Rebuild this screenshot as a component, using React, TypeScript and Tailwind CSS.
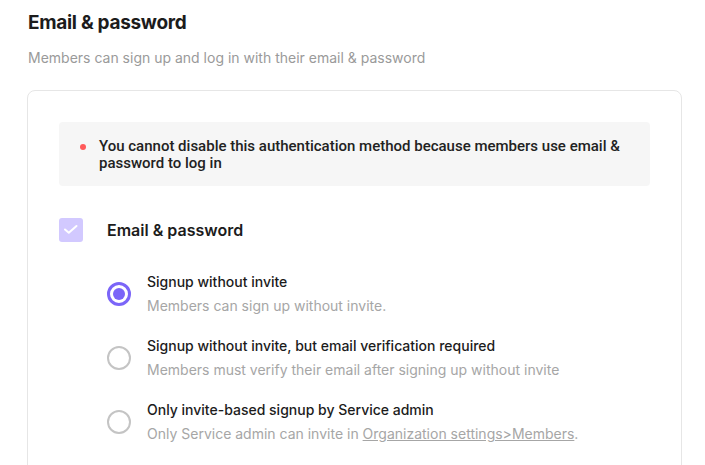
const options = [
  {
    title: "Signup without invite",
    desc: <>Members can sign up without invite.</>,
    checked: true,
  },
  {
    title: "Signup without invite, but email verification required",
    desc: <>Members must verify their email after signing up without invite</>,
    checked: false,
  },
  {
    title: "Only invite-based signup by Service admin",
    desc: (
      <>
        Only Service admin can invite in{" "}
        <a href="#" className="underline">
          Organization settings&gt;Members
        </a>
        .
      </>
    ),
    checked: false,
  },
];

const App = () => {
  return (
    <div className="h-[465px] overflow-hidden bg-white pl-[27px] pr-[23px] pt-[10px] font-['Inter',sans-serif] text-[#1c1c1c]">
      <h1 className="pl-px text-[19px] font-bold leading-[26px] tracking-[-0.3px]">
        Email &amp; password
      </h1>
      <p className="mt-[12px] pl-px text-[14px] leading-[20px] text-[#9a9a9a]">
        Members can sign up and log in with their email &amp; password
      </p>

      <div className="mt-[22px] rounded-lg border border-[#e6e6e6] px-[31px] pt-[31px] pb-10">
        <div className="flex items-start gap-[13px] rounded bg-[#f6f6f6] pt-4 pb-[14px] pl-[21px] pr-4">
          <span className="mt-[6px] h-[6px] w-[6px] shrink-0 rounded-full bg-[#ff5a5a]" />
          <p className="font-['Roboto',sans-serif] text-[15px] font-medium leading-[17px] text-[#222]">
            You cannot disable this authentication method because members use email &amp; password to log in
          </p>
        </div>

        <div className="mt-[32px] flex items-center gap-6">
          <span className="h-6 w-6 rounded-[3px] bg-[#d2c9ff]">
            <svg width="24" height="24" viewBox="0 0 24 24" fill="none" stroke="#ffffff" strokeWidth="2" strokeLinecap="round" strokeLinejoin="round">
              <path d="M6 11.5l3.8 3.3L17.5 8" />
            </svg>
          </span>
          <span className="text-[16px] font-semibold leading-6">Email &amp; password</span>
        </div>

        <div className="mt-[30px] flex flex-col gap-5 pl-12">
          {options.map((o, idx) => (
            <label key={idx} className="flex items-center gap-4">
              {o.checked ? (
                <span className="flex h-6 w-6 shrink-0 items-center justify-center rounded-full border-[3px] border-[#7b65f8]">
                  <span className="h-[12px] w-[12px] rounded-full bg-[#7b65f8]" />
                </span>
              ) : (
                <span className="h-6 w-6 shrink-0 rounded-full border-2 border-[#c4c4c4]" />
              )}
              <div className="flex flex-col">
                <span className="text-[14px] font-medium leading-5 text-[#1c1c1c]">{o.title}</span>
                <span className="mt-[4px] text-[14px] leading-5 text-[#a6a6a6]">{o.desc}</span>
              </div>
            </label>
          ))}
        </div>
      </div>
    </div>
  );
};

export default App;
